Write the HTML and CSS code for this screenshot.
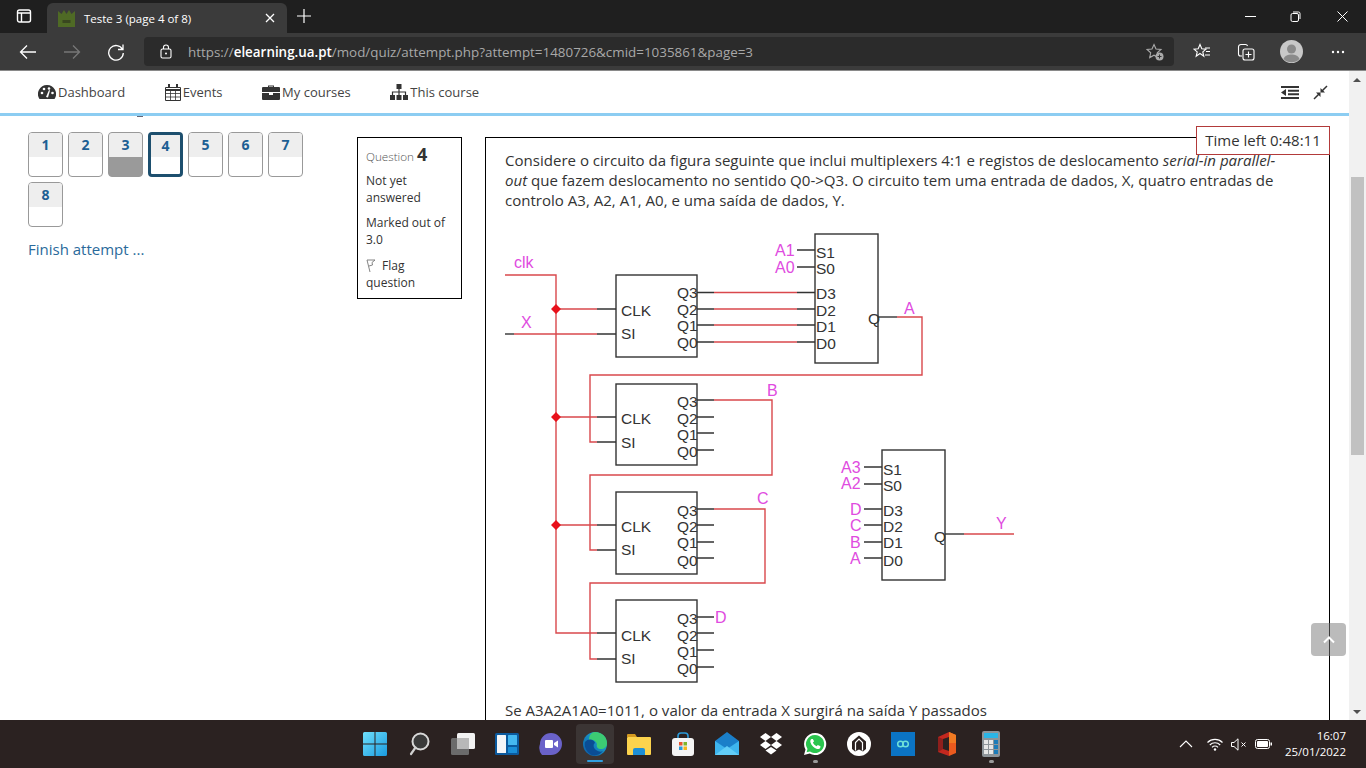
FILE: index.html
```html
<!DOCTYPE html>
<html lang="en">

<head>
    <meta charset="UTF-8">
    <meta name="viewport" content="width=device-width, initial-scale=1.0">
    <title>Teste 3 (page 4 of 8)</title>
    <link rel="stylesheet" href="styles.css">
</head>

<body>
    <div class="tabbar">
        <svg class="tab-toggle" width="16" height="16" viewBox="0 0 16 16"><rect x="1.5" y="2" width="13" height="12" rx="2" fill="none" stroke="#fff" stroke-width="1.4"/><path d="M2 5h12M5.5 5v9" stroke="#fff" stroke-width="1.4" fill="none"/></svg>
        <div class="tab">
            <svg class="tab-icon" width="17" height="17" viewBox="0 0 17 17"><path d="M0 1l3.500 3L6 0l2.500 4L11 0l2.500 4L17 1v16H0z" fill="#4f6a25"/><path d="M4.500 10h8v3h-8z" fill="#39471f"/></svg>
            <span class="tab-title">Teste 3 (page 4 of 8)</span>
            <svg width="10" height="10" viewBox="0 0 10 10"><path d="M1 1l8 8M9 1l-8 8" stroke="#fff" stroke-width="1.3"/></svg>
        </div>
        <svg class="new-tab" width="16" height="16" viewBox="0 0 16 16"><path d="M8 1v14M1 8h14" stroke="#fff" stroke-width="1.2"/></svg>
        <div class="window-controls">
            <svg width="11" height="11" viewBox="0 0 11 11"><path d="M0 5.5h11" stroke="#fff" stroke-width="1"/></svg>
            <svg class="restore" width="11" height="11" viewBox="0 0 11 11"><rect x="1" y="2.500" width="7.500" height="8" rx="1.500" fill="none" stroke="#fff"/><path d="M3 1h5.500A1.500 1.500 0 0 1 10 2.500V8" fill="none" stroke="#fff"/></svg>
            <svg width="11" height="11" viewBox="0 0 11 11"><path d="M.5.5l10 10M10.500.5l-10 10" stroke="#fff" stroke-width="1"/></svg>
        </div>
    </div>

    <div class="toolbar">
        <svg width="18" height="16" viewBox="0 0 18 16"><path d="M17 8H1.500M8 1.500L1.500 8 8 14.500" fill="none" stroke="#fff" stroke-width="1.300"/></svg>
        <svg class="nav-disabled" width="18" height="16" viewBox="0 0 18 16"><path d="M1 8h15.500M10 1.500L16.500 8 10 14.500" fill="none" stroke="#777" stroke-width="1.300"/></svg>
        <svg width="18" height="18" viewBox="0 0 18 18"><path d="M15.500 6.500A7.300 7.300 0 1 0 16.300 10M16 1.500v5h-5" fill="none" stroke="#fff" stroke-width="1.300"/></svg>
        <div class="address">
            <svg width="12" height="15" viewBox="0 0 12 15"><rect x="1" y="5" width="10" height="9" rx="1.500" fill="none" stroke="#fff" stroke-width="1.100"/><path d="M3.500 5V3.500a2.500 2.500 0 0 1 5 0V5" fill="none" stroke="#fff" stroke-width="1.100"/><circle cx="6" cy="9.500" r="1" fill="#fff"/></svg>
            <span class="url">https://<b>elearning.ua.pt</b>/mod/quiz/attempt.php?attempt=1480726&amp;cmid=1035861&amp;page=3</span>
            <svg class="add-fav" width="18" height="18" viewBox="0 0 18 18"><path d="M8 1.500l2 4.500 5 .5-3.700 3.300 1 4.800L8 12.200l-4.300 2.400 1-4.800L1 6.500 6 6z" fill="none" stroke="#aaa" stroke-width="1.100"/><circle cx="13.500" cy="13.500" r="4" fill="#aaa"/><path d="M13.500 11.500v4M11.500 13.500h4" stroke="#333" stroke-width="1"/></svg>
        </div>
        <svg class="tool-icon" width="18" height="17" viewBox="0 0 18 17"><path d="M7 1.500l1.800 4.200 4.200.4-3.200 2.800 1 4.400L7 10.500l-3.800 2.800 1-4.400L1 6.100l4.200-.4z" fill="none" stroke="#fff" stroke-width="1.100"/><path d="M12 5h5M13 8.500h4M12 12h5" stroke="#fff" stroke-width="1.100"/></svg>
        <svg class="tool-icon" width="18" height="18" viewBox="0 0 18 18"><path d="M5 13H3.500A2 2 0 0 1 1.500 11V4A2.500 2.500 0 0 1 4 1.500h4.500a2 2 0 0 1 2 1.500" fill="none" stroke="#fff" stroke-width="1.100"/><rect x="6" y="6" width="11" height="11" rx="2" fill="none" stroke="#fff" stroke-width="1.100"/><path d="M11.500 8.500v6M8.500 11.500h6" stroke="#fff" stroke-width="1.100"/></svg>
        <svg class="avatar" width="23" height="23" viewBox="0 0 23 23"><circle cx="11.500" cy="11.500" r="11.500" fill="#c8c8c8"/><circle cx="11.500" cy="9" r="4.500" fill="#8a8a8a"/><path d="M3.500 19c1.500-3.500 4.500-4.500 8-4.500s6.500 1 8 4.500a11.500 11.500 0 0 1-16 0z" fill="#8a8a8a"/></svg>
        <svg class="more" width="14" height="4" viewBox="0 0 14 4"><circle cx="2" cy="2" r="1.200" fill="#fff"/><circle cx="7" cy="2" r="1.200" fill="#fff"/><circle cx="12" cy="2" r="1.200" fill="#fff"/></svg>
    </div>

    <div class="viewport">
        <div class="page">
            <nav class="topnav">
                <a class="topnav-item">
                    <svg width="18" height="15" viewBox="0 0 18 15"><path d="M9 0a9 9 0 0 0-7.500 14h15A9 9 0 0 0 9 0z" fill="#333"/><circle cx="4" cy="8" r="1.300" fill="#fff"/><circle cx="6" cy="4" r="1.300" fill="#fff"/><circle cx="11" cy="3.500" r="1.300" fill="#fff"/><circle cx="14.500" cy="8" r="1.300" fill="#fff"/><path d="M8 12l3-7 1 .4-2 7z" fill="#fff"/></svg>
                    Dashboard
                </a>
                <a class="topnav-item">
                    <svg width="16" height="17" viewBox="0 0 16 17"><path d="M.5 3.500h15v13H.5z" fill="none" stroke="#333"/><path d="M.5 6h15" stroke="#333" stroke-width="2"/><path d="M5.500 6v10M10.500 6v10M.5 9.500h15M.5 13h15" stroke="#333" stroke-width=".8"/><rect x="3" y="0" width="2" height="4" fill="#333"/><rect x="11" y="0" width="2" height="4" fill="#333"/></svg>
                    Events
                </a>
                <a class="topnav-item">
                    <svg width="18" height="15" viewBox="0 0 18 15"><path d="M6 2V.5h6V2h5a1 1 0 0 1 1 1v4H0V3a1 1 0 0 1 1-1zM7 2h4V1.500H7z" fill="#333"/><path d="M0 8h7v2h4V8h7v6a1 1 0 0 1-1 1H1a1 1 0 0 1-1-1z" fill="#333"/></svg>
                    My courses
                </a>
                <a class="topnav-item">
                    <svg width="18" height="16" viewBox="0 0 18 16"><rect x="6.500" y="0" width="5" height="5" fill="#333"/><rect x="0" y="11" width="5" height="5" fill="#333"/><rect x="6.500" y="11" width="5" height="5" fill="#333"/><rect x="13" y="11" width="5" height="5" fill="#333"/><path d="M9 5v6M2.500 11V8h13v3" fill="none" stroke="#333" stroke-width="1.200"/></svg>
                    This course
                </a>
                <div class="topnav-right">
                    <svg width="18" height="13" viewBox="0 0 18 13"><path d="M0 0h18v2H0zM7 3.700h11v2H7zM7 7.300h11v2H7zM0 11h18v2H0zM5 3v7L0 6.500z" fill="#333"/></svg>
                    <svg width="15" height="15" viewBox="0 0 15 15"><path d="M14.500 1.500L10.300 5.700 12 7.500H7.500V3l1.700 1.700L13.500.5zM.5 13.500l4.200-4.200L3 7.500h4.500V12l-1.700-1.700L1.500 14.500z" fill="#333"/></svg>
                </div>
            </nav>

            <div class="layout">
                <aside class="quiznav">
                    <div class="heading-tail"></div>
                    <div class="qn-grid">
                        <a class="qn"><span>1</span></a>
                        <a class="qn"><span>2</span></a>
                        <a class="qn answered"><span>3</span></a>
                        <a class="qn current"><span>4</span></a>
                        <a class="qn"><span>5</span></a>
                        <a class="qn"><span>6</span></a>
                        <a class="qn"><span>7</span></a>
                        <a class="qn"><span>8</span></a>
                    </div>
                    <a class="finish">Finish attempt ...</a>
                </aside>

                <div class="info">
                    <h4>Question <b>4</b></h4>
                    <p class="state">Not yet answered</p>
                    <p>Marked out of 3.0</p>
                    <p class="flag">
                        <svg width="10" height="13" viewBox="0 0 10 13"><path d="M1 1l3 12M1 1h8L6 3.500 6.500 6 3 7" fill="none" stroke="#777" stroke-width=".9"/></svg>
                        Flag question
                    </p>
                </div>

                <main class="question">
                    <p class="qtext">Considere o circuito da figura seguinte que inclui multiplexers 4:1 e registos de deslocamento <i>serial-in parallel-out</i> que fazem deslocamento no sentido Q0-&gt;Q3. O circuito tem uma entrada de dados, X, quatro entradas de controlo A3, A2, A1, A0, e uma saída de dados, Y.</p>

                    <svg class="circuit" width="530" height="470" viewBox="500 225 530 470">
                        <g class="red" fill="none">
                            <path d="M505 275H556V633H597"/>
                            <path d="M556 309H597M556 417H597M556 525H597"/>
                            <path d="M514 334H597"/>
                            <path d="M714 292.500H797M714 309H797M714 325H797M714 342H797"/>
                            <path d="M897 317H922V375H590V442H597"/>
                            <path d="M714 400H772V475H590V550H597"/>
                            <path d="M714 509H765V583H590V659H597"/>
                            <path d="M964 534H1014"/>
                        </g>
                        <path class="dot" d="M556 304l5 5-5 5-5-5zM556 412l5 5-5 5-5-5zM556 520l5 5-5 5-5-5z"/>
                        <g class="black" fill="none">
                            <path d="M505 334H514"/>
                            <rect x="616" y="275" width="81" height="82"/>
                            <rect x="616" y="384" width="81" height="81"/>
                            <rect x="616" y="492" width="81" height="82"/>
                            <rect x="616" y="600" width="81" height="82"/>
                            <rect x="815" y="234" width="63" height="129"/>
                            <rect x="882" y="450" width="63" height="130"/>
                            <path d="M597 309H616M597 334H616M597 417H616M597 442H616M597 525H616M597 550H616M597 633H616M597 659H616"/>
                            <path d="M697 292.500H714M697 309H714M697 325H714M697 342H714"/>
                            <path d="M797 292.500H815M797 309H815M797 325H815M797 342H815M797 250H815M797 267H815"/>
                            <path d="M878 317H897"/>
                            <path d="M697 400H714M697 417H714M697 433H714M697 450H714"/>
                            <path d="M697 509H714M697 525H714M697 542H714M697 558H714"/>
                            <path d="M697 617H714M697 633H714M697 650H714M697 667H714"/>
                            <path d="M864 467H882M864 484H882M864 509H882M864 525H882M864 542H882M864 558H882"/>
                            <path d="M945 534H964"/>
                        </g>
                        <g class="part-text">
                            <text x="621" y="316">CLK</text><text x="621" y="339">SI</text>
                            <text x="677" y="298">Q3</text><text x="677" y="315">Q2</text><text x="677" y="331">Q1</text><text x="677" y="348">Q0</text>
                            <text x="621" y="424">CLK</text><text x="621" y="448">SI</text>
                            <text x="677" y="407">Q3</text><text x="677" y="424">Q2</text><text x="677" y="440">Q1</text><text x="677" y="457">Q0</text>
                            <text x="621" y="532">CLK</text><text x="621" y="555">SI</text>
                            <text x="677" y="516">Q3</text><text x="677" y="532">Q2</text><text x="677" y="548">Q1</text><text x="677" y="566">Q0</text>
                            <text x="621" y="641">CLK</text><text x="621" y="664">SI</text>
                            <text x="677" y="624">Q3</text><text x="677" y="641">Q2</text><text x="677" y="657">Q1</text><text x="677" y="674">Q0</text>
                            <text x="816" y="258">S1</text><text x="816" y="274">S0</text>
                            <text x="816" y="299">D3</text><text x="816" y="316">D2</text><text x="816" y="332">D1</text><text x="816" y="349">D0</text>
                            <text x="868" y="324">Q</text>
                            <text x="883" y="475">S1</text><text x="883" y="491">S0</text>
                            <text x="883" y="516">D3</text><text x="883" y="532">D2</text><text x="883" y="548">D1</text><text x="883" y="566">D0</text>
                            <text x="934" y="542">Q</text>
                        </g>
                        <g class="signal-text">
                            <text x="514" y="268">clk</text><text x="521" y="328">X</text>
                            <text x="775" y="256">A1</text><text x="775" y="273">A0</text>
                            <text x="904" y="314">A</text><text x="767" y="396">B</text><text x="757" y="504">C</text><text x="715" y="623">D</text>
                            <text x="841" y="473">A3</text><text x="841" y="489">A2</text>
                            <text x="850" y="515">D</text><text x="850" y="531">C</text><text x="850" y="548">B</text><text x="850" y="564">A</text>
                            <text x="996" y="529">Y</text>
                        </g>
                    </svg>

                    <p class="qtext">Se A3A2A1A0=1011, o valor da entrada X surgirá na saída Y passados</p>
                </main>
            </div>

            <div class="timer">Time left 0:48:11</div>
            <a class="totop">
                <svg width="12" height="8" viewBox="0 0 12 8"><path d="M1 6.500l5-5 5 5" fill="none" stroke="#fff" stroke-width="2"/></svg>
            </a>
        </div>

        <div class="scrollbar">
            <span class="arrow-up"></span>
            <div class="thumb"></div>
            <span class="arrow-down"></span>
        </div>
    </div>

    <footer class="taskbar">
        <div></div>
        <div class="task-icons">
            <div class="task-icon"><svg width="24" height="24" viewBox="0 0 24 24"><defs><linearGradient id="win" x1="0" y1="0" x2="1" y2="1"><stop offset="0" stop-color="#6fe0fb"/><stop offset="1" stop-color="#1a9be0"/></linearGradient></defs><path d="M0 1.500A1.500 1.500 0 0 1 1.500 0h10v11.500H0zM12.500 0h10A1.500 1.500 0 0 1 24 1.500v10H12.500zM0 12.500h11.500V24h-10A1.500 1.500 0 0 1 0 22.500zM12.500 12.500H24v10a1.500 1.500 0 0 1-1.500 1.500h-10z" fill="url(#win)"/></svg></div>
            <div class="task-icon"><svg width="24" height="24" viewBox="0 0 24 24"><circle cx="13.500" cy="9.500" r="8" fill="#3a3a3a" stroke="#d8d8d8" stroke-width="2"/><path d="M8.500 15.500L4 22" stroke="#d0d0d0" stroke-width="2.200" stroke-linecap="round"/></svg></div>
            <div class="task-icon"><svg width="24" height="24" viewBox="0 0 24 24"><rect x="6" y="1" width="18" height="16" rx="1.500" fill="#f2f2f2"/><rect x="0" y="6" width="18" height="17" rx="1.500" fill="#6b6b6b"/><rect x="6" y="6" width="12" height="11" fill="#b8b8b8"/></svg></div>
            <div class="task-icon"><svg width="24" height="24" viewBox="0 0 24 24"><rect x="0" y="1" width="24" height="22" rx="1.500" fill="#0b5a9e"/><rect x="2" y="3" width="9" height="18" rx=".5" fill="#f4f6f8"/><rect x="13" y="3" width="9" height="10" rx=".5" fill="#45b8f0"/><rect x="13" y="15" width="9" height="6" rx=".5" fill="#1a8fd8"/></svg></div>
            <div class="task-icon"><svg width="24" height="24" viewBox="0 0 24 24"><path d="M12 1a11 11 0 0 1 0 22H3a11 11 0 0 1-2-11A11 11 0 0 1 12 1z" fill="#6a62c9"/><rect x="6" y="8" width="8" height="8" rx="1" fill="#fff"/><path d="M15 11l4-2.500v7L15 13z" fill="#fff"/></svg></div>
            <div class="task-icon selected"><svg width="24" height="24" viewBox="0 0 24 24"><defs><linearGradient id="edge" x1="0" y1="1" x2="1" y2="0"><stop offset="0" stop-color="#0c59a4"/><stop offset="1" stop-color="#1fb8dc"/></linearGradient></defs><circle cx="12" cy="12" r="12" fill="url(#edge)"/><path d="M12 0c7 0 12 5 12 11 0 4-3 6-6 6-3 0-5-2-4-5-1-3-4-5-8-4C6 4 8 0 12 0z" fill="#3ccb73"/><path d="M2 10c3-4 9-3 10 1-2 1-2 5 1 7 3 2 5 2 7 1-3 4-9 6-13 3C3 19 1 14 2 10z" fill="#0a4d94"/></svg><span class="bar"></span></div>
            <div class="task-icon"><svg width="24" height="24" viewBox="0 0 24 24"><path d="M0 3a1 1 0 0 1 1-1h7l2 3H0z" fill="#d49a20"/><rect x="0" y="5" width="24" height="18" rx="1" fill="#fcd34d"/><path d="M6 23v-5a2 2 0 0 1 2-2h8a2 2 0 0 1 2 2v5z" fill="#1d8fd6"/></svg></div>
            <div class="task-icon"><svg width="24" height="24" viewBox="0 0 24 24"><path d="M7 7V4a3 3 0 0 1 3-3h4a3 3 0 0 1 3 3v3" fill="none" stroke="#2c9ad8" stroke-width="1.600"/><rect x="1" y="6" width="22" height="18" rx="3" fill="#f5f5f5"/><rect x="8" y="10" width="3.500" height="3.500" fill="#e8542f"/><rect x="12.500" y="10" width="3.500" height="3.500" fill="#7db52c"/><rect x="8" y="14.500" width="3.500" height="3.500" fill="#2a9ad8"/><rect x="12.500" y="14.500" width="3.500" height="3.500" fill="#f5b81c"/></svg></div>
            <div class="task-icon"><svg width="24" height="24" viewBox="0 0 24 24"><path d="M0 9l12-9 12 9v14H0z" fill="#1b7fc9"/><path d="M0 9l12 8 12-8v14H0z" fill="#3eb5ee"/><path d="M0 23l12-9 12 9z" fill="#62cdf7"/></svg></div>
            <div class="task-icon"><svg width="24" height="22" viewBox="0 0 24 22"><path d="M6.500 0L12 4 6.500 8 1 4zM17.500 0L23 4l-5.500 4L12 4zM6.500 8L12 12l-5.500 4L1 12zM17.500 8L23 12l-5.500 4L12 12zM6.500 17.500L12 14l5.500 3.500L12 21.500z" fill="#fff"/></svg></div>
            <div class="task-icon"><svg width="24" height="24" viewBox="0 0 24 24"><path d="M12 1A11 11 0 0 0 2.500 17.500L1 23l5.700-1.500A11 11 0 1 0 12 1z" fill="#fff"/><path d="M12 3a9 9 0 0 0-7.500 14l-.9 3.300 3.400-.9A9 9 0 1 0 12 3z" fill="#2ac54e"/><path d="M8.500 7c-1 .5-1.500 2-1 3.500 1 3 3.500 5.500 6.500 6.500 1.500.3 3-.3 3.300-1.500l.2-1.300-2.700-1.300-1.200 1.300c-1.600-.7-3-2-3.700-3.700l1.200-1.200L9.800 7z" fill="#fff"/></svg><span class="dot"></span></div>
            <div class="task-icon"><svg width="24" height="24" viewBox="0 0 24 24"><circle cx="12" cy="12" r="12" fill="#fff"/><path d="M12 3.500L5 9.500V17l3 2.500 4-2 4 2 3-2.500V9.500z" fill="#2b2221"/><path d="M8.500 18.500V10.500L12 7l3.500 3.500v8" fill="none" stroke="#fff" stroke-width="1.200"/></svg></div>
            <div class="task-icon"><svg width="24" height="24" viewBox="0 0 24 24"><rect width="24" height="24" fill="#0b74c4"/><circle cx="9.500" cy="12" r="2.800" fill="none" stroke="#6fe0d8" stroke-width="1.500"/><circle cx="14.500" cy="12" r="2.800" fill="none" stroke="#6fe0d8" stroke-width="1.500"/></svg></div>
            <div class="task-icon"><svg width="20" height="24" viewBox="0 0 20 24"><path d="M12 0l7 3v18l-7 3-11-4V5z" fill="#2b2221"/><path d="M1 5l11-5v5L6 7v10l6 2v5L1 20z" fill="#c2281f"/><path d="M1 5v15l5-3V7z" fill="#8f1f1c"/><path d="M12 0l7 3v18l-7 3z" fill="#ea5a1e"/><path d="M12 0l7 3v8h-7z" fill="#f07a22"/></svg></div>
            <div class="task-icon"><svg width="18" height="26" viewBox="0 0 18 26"><rect width="18" height="26" rx="2" fill="#8d9499"/><rect x="2" y="2" width="14" height="5" fill="#2bb5e6"/><rect x="2" y="9" width="4" height="4" fill="#e6e6e6"/><rect x="7" y="9" width="4" height="4" fill="#e6e6e6"/><rect x="12" y="9" width="4" height="4" fill="#1c7bb8"/><rect x="2" y="14" width="4" height="4" fill="#e6e6e6"/><rect x="7" y="14" width="4" height="4" fill="#e6e6e6"/><rect x="12" y="14" width="4" height="4" fill="#1c7bb8"/><rect x="2" y="19" width="4" height="4" fill="#e6e6e6"/><rect x="7" y="19" width="4" height="4" fill="#e6e6e6"/><rect x="12" y="19" width="4" height="4" fill="#1c7bb8"/></svg><span class="dot"></span></div>
        </div>
        <div class="tray">
            <svg width="14" height="8" viewBox="0 0 14 8"><path d="M1 7l6-6 6 6" fill="none" stroke="#fff" stroke-width="1.100"/></svg>
            <svg class="wifi" width="16" height="13" viewBox="0 0 16 13"><path d="M.5 4.500a10.500 10.500 0 0 1 15 0M2.800 7a7.300 7.300 0 0 1 10.400 0M5 9.300a4.200 4.200 0 0 1 6 0" fill="none" stroke="#fff" stroke-width="1.100"/><circle cx="8" cy="11.500" r="1.200" fill="#fff"/></svg>
            <svg class="vol" width="16" height="13" viewBox="0 0 16 13"><path d="M.5 4.500h2.500L7 .8v11.400L3 8.500H.5z" fill="none" stroke="#fff"/><path d="M10.500 4.500l4 4M14.500 4.500l-4 4" stroke="#fff"/></svg>
            <svg class="batt" width="17" height="10" viewBox="0 0 17 10"><rect x=".5" y=".5" width="14" height="9" rx="2" fill="none" stroke="#fff"/><rect x="2" y="2" width="11" height="6" rx=".8" fill="#fff"/><rect x="15.500" y="3.500" width="1.500" height="3" fill="#fff"/></svg>
            <div class="clock"><span>16:07</span><span>25/01/2022</span></div>
        </div>
    </footer>
</body>

</html>
```
FILE: styles.css
```css
html,
body {
    margin: 0;
    padding: 0;
    height: 100%;
    overflow: hidden;
}

body {
    display: flex;
    flex-direction: column;
    height: 768px;
    font-family: "Open Sans", sans-serif;
    color: #333;
    background-color: #fff;
}

/* browser chrome */
.tabbar {
    display: flex;
    align-items: flex-end;
    height: 33px;
    flex: none;
    background-color: #1f1f1f;
}

.tab-toggle {
    margin: 0 15px 9px 16px;
}

.tab {
    display: flex;
    align-items: center;
    width: 240px;
    height: 30px;
    box-sizing: border-box;
    padding: 0 12px 0 11px;
    background-color: #3b3b3b;
    border-radius: 6px 6px 0 0;
    color: #fff;
    font-size: 11.5px;
}

.tab-title {
    flex: 1;
    margin-left: 9px;
}

.new-tab {
    margin: 0 0 9px 9px;
}

.window-controls {
    display: flex;
    align-items: center;
    gap: 34px;
    margin-left: auto;
    padding: 0 18px 11px 0;
}

.restore {
    margin-right: 2px;
}

.toolbar {
    display: flex;
    align-items: center;
    height: 38px;
    flex: none;
    box-sizing: border-box;
    padding-left: 19px;
    background-color: #3b3b3b;
    border-bottom: 1px solid #8a8a8a;
}

.nav-disabled {
    margin: 0 26px;
}

.address {
    display: flex;
    align-items: center;
    width: 1030px;
    height: 29px;
    box-sizing: border-box;
    margin-left: 19px;
    padding: 0 10px 0 16px;
    background-color: #2b2b2b;
    border-radius: 4px;
}

.url {
    flex: 1;
    margin-left: 16px;
    font-size: 13.4px;
    color: #a8a8a8;
    white-space: nowrap;
}

.url b {
    font-weight: 600;
    color: #fff;
}

.tool-icon {
    margin-left: 19px;
}

.tool-icon + .tool-icon {
    margin-left: 26px;
}

.avatar {
    margin-left: 25px;
}

.more {
    margin-left: 28px;
}

/* page */
.viewport {
    display: flex;
    flex: 1;
    min-height: 0;
}

.page {
    position: relative;
    flex: 1;
    overflow: hidden;
}

.topnav {
    display: flex;
    align-items: center;
    gap: 39.6px;
    height: 42px;
    padding-left: 38px;
    background-color: #fff;
    border-bottom: 3px solid #8ccdf2;
    font-size: 13px;
}

.topnav-item {
    display: flex;
    align-items: center;
    gap: 2px;
    color: #444;
}

.topnav-right {
    display: flex;
    align-items: center;
    gap: 14px;
    margin-left: auto;
    padding-right: 21px;
}

.layout {
    display: flex;
    align-items: flex-start;
    padding-left: 28px;
}

.quiznav {
    width: 329px;
    flex: none;
}

/* bottom of the scrolled-away heading, only this bit shows under the nav */
.heading-tail {
    width: 6px;
    height: 1px;
    margin: 0 0 15px 109px;
    background-color: #667;
}

.qn-grid {
    display: grid;
    grid-template-columns: repeat(7, 35px);
    gap: 5px;
}

.qn {
    display: block;
    height: 45px;
    box-sizing: border-box;
    border: 1px solid #999;
    border-radius: 4px;
    overflow: hidden;
    background-color: #fff;
}

.qn span {
    display: block;
    height: 24px;
    background-color: #eee;
    color: #1d5f94;
    font-size: 14px;
    font-weight: 700;
    line-height: 24px;
    text-align: center;
}

.qn.answered {
    background-color: #9a9a9a;
}

.qn.current {
    border: 3px solid #1d4f6e;
}

.qn.current span {
    height: 22px;
    line-height: 22px;
}

.finish {
    display: block;
    margin-top: 12px;
    font-size: 15px;
    color: #2a6a9b;
}

.info {
    width: 105px;
    flex: none;
    box-sizing: border-box;
    margin-top: 21px;
    padding: 8px 8px 7px;
    border: 1px solid #000;
    font-size: 12px;
    line-height: 17px;
}

.info h4 {
    margin: 0 0 7px;
    font-size: 11.7px;
    font-weight: 300;
    color: #555;
}

.info h4 b {
    font-size: 18px;
    font-weight: 700;
    color: #333;
}

.info p {
    margin: 0 0 9px;
}

.info p.state {
    margin-bottom: 8px;
}

.info p.flag {
    margin-bottom: 0;
}

.flag svg {
    margin-right: 3px;
    vertical-align: -2px;
}

.question {
    width: 845px;
    height: 600px;
    flex: none;
    box-sizing: border-box;
    margin: 21px 0 0 23px;
    padding: 12px 40px 12px 19px;
    border: 1px solid #000;
    border-bottom: none;
}

.qtext {
    margin: 0;
    font-size: 15.05px;
    line-height: 20px;
}

.circuit {
    display: block;
    margin: 15px 0 5px -5px;
}

.red path {
    stroke: #d9484c;
    stroke-width: 1.4;
}

.black path,
.black rect {
    stroke: #333;
    stroke-width: 1.4;
}

.dot {
    fill: #e8101a;
}

.part-text text {
    font-family: "Liberation Sans", sans-serif;
    font-size: 15.5px;
    fill: #333;
}

.signal-text text {
    font-family: "Liberation Sans", sans-serif;
    font-size: 16px;
    fill: #e04be0;
}

.timer {
    position: absolute;
    top: 55px;
    left: 1196px;
    width: 134px;
    height: 29px;
    box-sizing: border-box;
    border: 1px solid #b23a3a;
    background-color: #fff;
    font-size: 15px;
    line-height: 27px;
    text-align: center;
}

.totop {
    position: absolute;
    top: 552px;
    left: 1311px;
    display: flex;
    align-items: center;
    justify-content: center;
    width: 35px;
    height: 33px;
    border-radius: 4px;
    background-color: rgba(120, 120, 120, 0.5);
}

.scrollbar {
    position: relative;
    width: 17px;
    flex: none;
    background-color: #f1f1f1;
}

.thumb {
    position: absolute;
    top: 106px;
    left: 2px;
    width: 13px;
    height: 278px;
    background-color: #c1c1c1;
}

.arrow-up,
.arrow-down {
    position: absolute;
    left: 4px;
    border-left: 4px solid transparent;
    border-right: 4px solid transparent;
}

.arrow-up {
    top: 7px;
    border-bottom: 4px solid #505050;
}

.arrow-down {
    bottom: 6px;
    border-top: 4px solid #505050;
}

/* windows taskbar */
.taskbar {
    display: grid;
    grid-template-columns: 1fr auto 1fr;
    align-items: center;
    height: 48px;
    flex: none;
    background-color: #2b2221;
    color: #fff;
}

.task-icons {
    display: flex;
}

.task-icon {
    position: relative;
    display: flex;
    align-items: center;
    justify-content: center;
    width: 44px;
    height: 48px;
}

.task-icon.selected::before {
    content: "";
    position: absolute;
    top: 4px;
    left: 3px;
    width: 38px;
    height: 40px;
    background-color: #3b3534;
    border-radius: 4px;
}

.task-icon svg {
    position: relative;
}

.task-icon .bar {
    position: absolute;
    bottom: 6px;
    left: 14px;
    width: 16px;
    height: 2px;
    border-radius: 1px;
    background-color: #2f9fe0;
}

.task-icon .dot {
    position: absolute;
    bottom: 5px;
    left: 20px;
    width: 5px;
    height: 3px;
    border-radius: 2px;
    background-color: #9a9a9a;
}

.tray {
    display: flex;
    align-items: center;
    justify-content: flex-end;
    padding-right: 20px;
}

.wifi {
    margin-left: 14px;
}

.vol {
    margin-left: 8px;
}

.batt {
    margin-left: 8px;
}

.clock {
    display: flex;
    flex-direction: column;
    align-items: flex-end;
    margin-left: 13px;
    font-size: 11.5px;
    line-height: 16px;
}
```
